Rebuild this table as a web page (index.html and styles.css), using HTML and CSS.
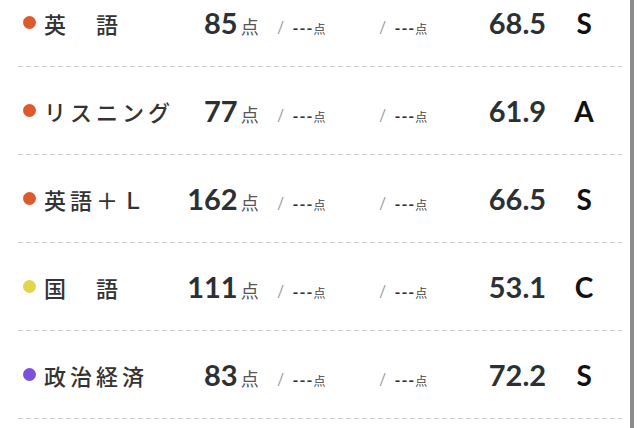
FILE: index.html
```html
<!DOCTYPE html>
<html lang="ja">
<head>
<meta charset="utf-8">
<link rel="stylesheet" href="styles.css">
</head>
<body>
<div class="panel">
  <ul class="list">
    <li class="row">
      <span class="subj"><span class="dot orange"></span><span class="label">英　語</span></span>
      <span class="num">85</span><span class="pt">点</span>
      <span class="sub"><span class="sl">/</span><span class="dash">---</span><span class="spt">点</span></span>
      <span class="sub"><span class="sl">/</span><span class="dash">---</span><span class="spt">点</span></span>
      <span class="dev">68.5</span>
      <span class="grade">S</span>
    </li>
    <li class="row">
      <span class="subj"><span class="dot orange"></span><span class="label">リスニング</span></span>
      <span class="num">77</span><span class="pt">点</span>
      <span class="sub"><span class="sl">/</span><span class="dash">---</span><span class="spt">点</span></span>
      <span class="sub"><span class="sl">/</span><span class="dash">---</span><span class="spt">点</span></span>
      <span class="dev">61.9</span>
      <span class="grade">A</span>
    </li>
    <li class="row">
      <span class="subj"><span class="dot orange"></span><span class="label">英語＋Ｌ</span></span>
      <span class="num">162</span><span class="pt">点</span>
      <span class="sub"><span class="sl">/</span><span class="dash">---</span><span class="spt">点</span></span>
      <span class="sub"><span class="sl">/</span><span class="dash">---</span><span class="spt">点</span></span>
      <span class="dev">66.5</span>
      <span class="grade">S</span>
    </li>
    <li class="row">
      <span class="subj"><span class="dot yellow"></span><span class="label">国　語</span></span>
      <span class="num">111</span><span class="pt">点</span>
      <span class="sub"><span class="sl">/</span><span class="dash">---</span><span class="spt">点</span></span>
      <span class="sub"><span class="sl">/</span><span class="dash">---</span><span class="spt">点</span></span>
      <span class="dev">53.1</span>
      <span class="grade">C</span>
    </li>
    <li class="row">
      <span class="subj"><span class="dot purple"></span><span class="label">政治経済</span></span>
      <span class="num">83</span><span class="pt">点</span>
      <span class="sub"><span class="sl">/</span><span class="dash">---</span><span class="spt">点</span></span>
      <span class="sub"><span class="sl">/</span><span class="dash">---</span><span class="spt">点</span></span>
      <span class="dev">72.2</span>
      <span class="grade">S</span>
    </li>
  </ul>
</div>
</body>
</html>
```
FILE: styles.css
```css
html, body {
  margin: 0;
  padding: 0;
  background: #fff;
  overflow: hidden;
}
body {
  font-family: "Noto Sans CJK JP", "Noto Sans", sans-serif;
  color: #333;
}
.panel {
  width: 604px;
  padding: 0 8px 0 18px;
  border-right: 4px solid #8b8b8b;
  margin-top: -21px;
  min-height: 470px;
}
.list {
  list-style: none;
  margin: 0;
  padding: 0;
}
.row {
  display: flex;
  align-items: center;
  height: 87px;
  padding-bottom: 1px;
  background-image: repeating-linear-gradient(to right, #cfcfcf 0 5px, transparent 5px 8px);
  background-size: 100% 1px;
  background-position: left bottom;
  background-repeat: no-repeat;
}
.subj {
  width: 162px;
  display: flex;
  align-items: center;
}
.dot {
  width: 13px;
  height: 13px;
  border-radius: 50%;
  margin-left: 5px;
  margin-right: 8px;
  flex: none;
}
.orange { background: #de5a2c; }
.yellow { background: #e3d64c; }
.purple { background: #7a53d8; }
.label {
  font-size: 22px;
  font-weight: 500;
  letter-spacing: 4px;
  color: #333;
  white-space: nowrap;
}
.num {
  width: 58px;
  text-align: right;
  font-family: Lato, sans-serif;
  font-weight: 700;
  font-size: 29px;
  color: #2b3034;
}
.pt {
  width: 29px;
  padding-left: 3px;
  font-size: 18px;
  color: #555;
  padding-top: 7px;
}
.sub {
  width: 94px;
  padding-left: 8px;
  display: flex;
  align-items: baseline;
  padding-top: 9px;
}
.sl {
  width: 15px;
  font-size: 18px;
  color: #8f8f8f;
  font-family: "Noto Sans", sans-serif;
  font-weight: 300;
}
.dash {
  font-family: Lato, sans-serif;
  font-weight: 700;
  font-size: 16px;
  letter-spacing: 1px;
  color: #333;
}
.spt {
  font-size: 12px;
  color: #444;
}
.dev {
  width: 73px;
  text-align: right;
  font-family: Lato, sans-serif;
  font-weight: 700;
  font-size: 29px;
  color: #2b3034;
}
.grade {
  width: 76px;
  text-align: center;
  font-family: Lato, sans-serif;
  font-weight: 700;
  font-size: 28px;
  color: #111;
}
```
